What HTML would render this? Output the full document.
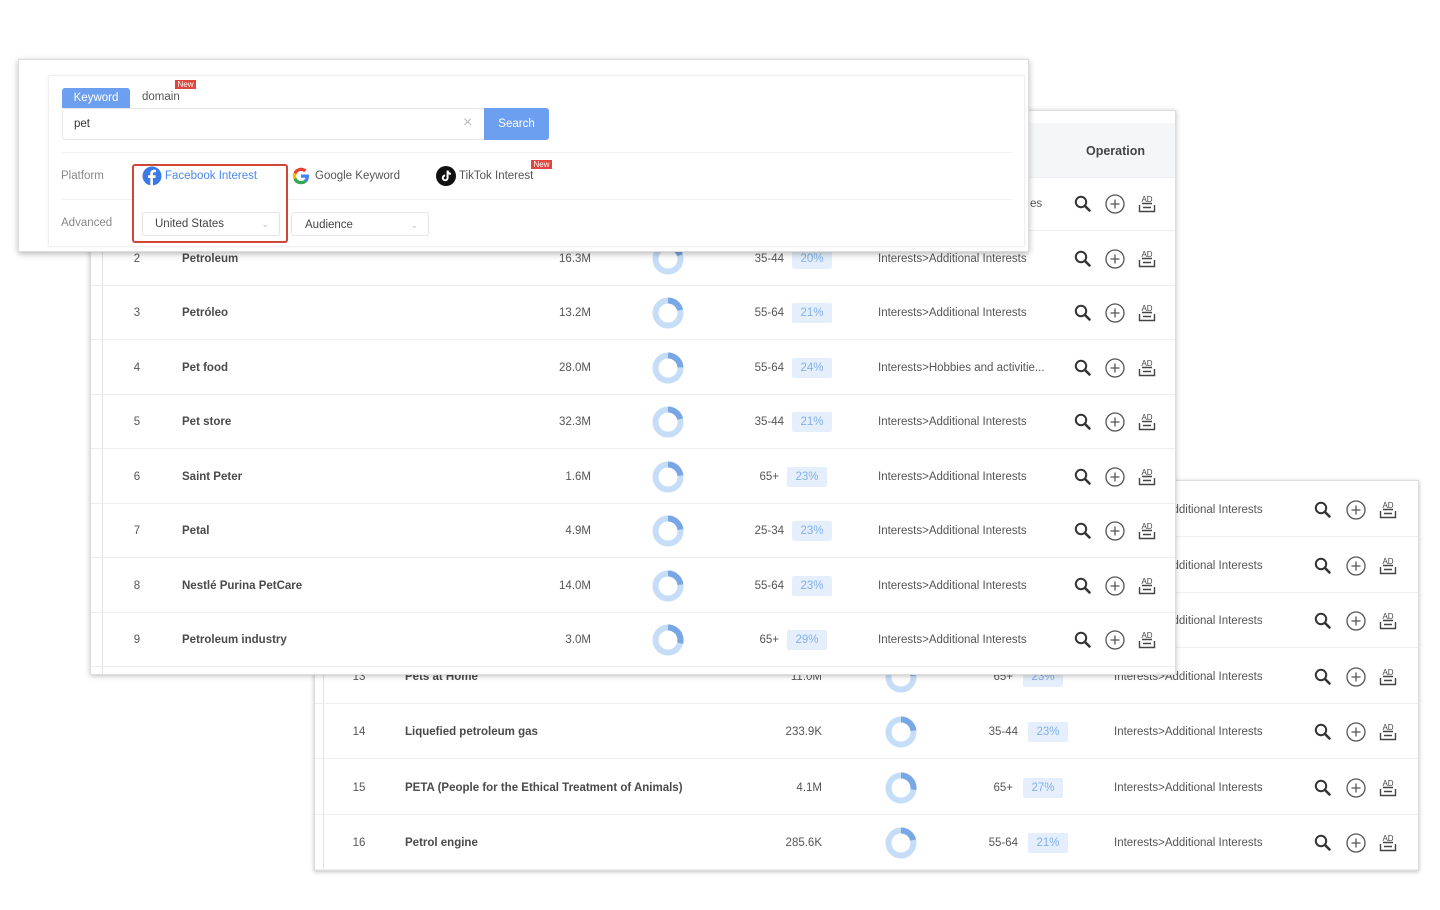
<!DOCTYPE html>
<html><head><meta charset="utf-8"><style>
*{box-sizing:border-box;margin:0;padding:0}
body{width:1440px;height:910px;background:#fff;position:relative;overflow:hidden;font-family:"Liberation Sans",Arial,sans-serif;color:#555;font-size:11.5px}
.p{position:absolute;background:#fff;overflow:hidden}
.row{position:absolute;left:0;right:0;height:54px;border-bottom:1px solid #eceef1}
.row>*{position:absolute;top:0;line-height:54px;white-space:nowrap}
.idx{width:20px;text-align:center}
.nm{font-weight:bold;color:#4a4a4a}
.sz{text-align:right;width:80px}
.age{text-align:right;width:50px}
.bd{top:17px!important;height:20px;line-height:20px!important;width:40px;background:#e5effb;color:#82b0ea;text-align:center;border-radius:2px}
.dn{top:11px!important;line-height:0!important}
.ic{top:17px!important;line-height:0!important}
</style></head><body>

<div class="p" style="left:314px;top:480px;width:1105px;height:391px;border:1px solid #ddd;box-shadow:0 1px 4px rgba(0,0,0,.25)">
  <div style="position:absolute;left:8px;top:0;bottom:0;border-left:1px solid #e3e3e3"></div>
  <div id="p3"></div>
</div>

<div class="p" style="left:90px;top:110px;width:1086px;height:565px;border:1px solid #ddd;box-shadow:0 1px 5px rgba(0,0,0,.25)">
  <div style="position:absolute;left:11px;top:0;bottom:0;border-left:1px solid #e3e3e3"></div>
  <div style="position:absolute;left:11px;right:0;top:12px;height:55px;background:#f5f6f8;border-bottom:1px solid #eceef1"></div>
  <div style="position:absolute;left:995px;top:33px;font-weight:bold;color:#444;font-size:12.5px">Operation</div>
  <div id="p2"></div>
</div>

<div class="p" style="left:18px;top:59px;width:1011px;height:193px;border:1px solid #ddd;box-shadow:0 2px 6px rgba(0,0,0,.28)">
  <div style="position:absolute;left:29px;top:15px;width:977px;height:172px;border:1px solid #f0f0f0;box-shadow:0 0 3px rgba(0,0,0,.06)"></div>
  <div style="position:absolute;left:43px;top:28px;width:68px;height:20px;background:#6d9ff0;color:#fff;text-align:center;line-height:20px;border-radius:3px 3px 0 0">Keyword</div>
  <div style="position:absolute;left:123px;top:31px;color:#555">domain</div>
  <div style="position:absolute;left:156px;top:20px;width:21px;height:9px;background:#e0463d;color:#fff;font-size:8px;line-height:9px;text-align:center">New</div>
  <div style="position:absolute;left:43px;top:48px;width:423px;height:32px;border:1px solid #e6e6e6;border-radius:3px 0 0 3px"></div>
  <div style="position:absolute;left:55px;top:58px;color:#333">pet</div>
  <div style="position:absolute;left:444px;top:54px;color:#bbb;font-size:16px">×</div>
  <div style="position:absolute;left:465px;top:48px;width:65px;height:32px;background:#6d9ff0;color:#fff;line-height:32px;text-align:center;border-radius:0 3px 3px 0">Search</div>
  <div style="position:absolute;left:43px;top:92px;width:950px;border-top:1px solid #f0f0f0"></div>
  <div style="position:absolute;left:42px;top:110px;color:#888">Platform</div>
  <div style="position:absolute;left:43px;top:139px;width:950px;border-top:1px solid #f0f0f0"></div>
  <div style="position:absolute;left:113px;top:104px;width:156px;height:79px;border:2px solid #d1453b;border-radius:3px;background:#fff"></div>
  <svg style="position:absolute;left:123px;top:106px" width="20" height="20" viewBox="0 0 20 20"><circle cx="10" cy="10" r="9.5" fill="#3b79e6"/><path d="M11 19.5V12h2.4l.4-2.7H11V7.6c0-.8.3-1.3 1.4-1.3h1.5V3.9c-.3 0-1.1-.1-2.1-.1-2.1 0-3.5 1.3-3.5 3.6v1.9H6V12h2.3v7.5z" fill="#fff"/></svg>
  <div style="position:absolute;left:146px;top:110px;color:#4d88e8">Facebook Interest</div>
  <svg style="position:absolute;left:272px;top:106px" width="20" height="20" viewBox="0 0 20 20"><path d="M18 10.2c0-.6-.1-1.2-.2-1.7H10v3.3h4.5a3.9 3.9 0 0 1-1.7 2.5v2.1h2.7c1.6-1.5 2.5-3.6 2.5-6.2z" fill="#4285f4"/><path d="M10 18.3c2.3 0 4.2-.8 5.5-2l-2.7-2.1c-.7.5-1.700.8-2.8.8-2.2 0-4-1.5-4.7-3.4H2.6v2.1A8.300 8.300 0 0 0 10 18.3z" fill="#34a853"/><path d="M5.3 11.6a5 5 0 0 1 0-3.2V6.3H2.6a8.3 8.3 0 0 0 0 7.4z" fill="#fbbc05"/><path d="M10 5c1.2 0 2.3.4 3.2 1.2l2.4-2.4A8.3 8.3 0 0 0 2.6 6.3l2.7 2.1C6 6.5 7.8 5 10 5z" fill="#ea4335"/></svg>
  <div style="position:absolute;left:296px;top:110px;color:#555">Google Keyword</div>
  <svg style="position:absolute;left:417px;top:106px" width="20" height="20" viewBox="0 0 20 20"><circle cx="10" cy="10" r="10" fill="#111"/><path d="M10.6 4.5h2c.1 1.3 1 2.3 2.3 2.4v2c-.9 0-1.6-.3-2.3-.7v3.7a3.4 3.4 0 1 1-3.4-3.4v2a1.4 1.4 0 1 0 1.4 1.4z" fill="#fff"/></svg>
  <div style="position:absolute;left:440px;top:110px;color:#555">TikTok Interest</div>
  <div style="position:absolute;left:512px;top:100px;width:21px;height:9px;background:#e0463d;color:#fff;font-size:8px;line-height:9px;text-align:center">New</div>
  <div style="position:absolute;left:42px;top:157px;color:#888">Advanced</div>
  <div style="position:absolute;left:123px;top:152px;width:138px;height:24px;border:1px solid #e3e3e3;border-radius:3px;padding-left:12px;line-height:23px;color:#444">United States<span style="position:absolute;right:10px;color:#bbb;font-size:9px">&#8964;</span></div>
  <div style="position:absolute;left:272px;top:152px;width:138px;height:24px;border:1px solid #e3e3e3;border-radius:3px;padding-left:13px;line-height:24px;color:#444">Audience<span style="position:absolute;right:10px;color:#bbb;font-size:9px">&#8964;</span></div>
</div>

<script>
var ic='<svg width="20" height="20" viewBox="0 0 20 20"><circle cx="8" cy="8" r="5.2" fill="none" stroke="#333" stroke-width="2"/><path d="M12 12l4.5 4.5" stroke="#333" stroke-width="2.6" stroke-linecap="round"/></svg>';
var pl='<svg width="22" height="22" viewBox="0 0 22 22"><circle cx="11" cy="11" r="9" fill="none" stroke="#555" stroke-width="1.3"/><path d="M11 6.5v9M6.5 11h9" stroke="#555" stroke-width="1.3"/></svg>';
var ad='<svg width="22" height="20" viewBox="0 0 22 20"><text x="11" y="8" font-size="8" text-anchor="middle" font-family="Liberation Sans" fill="#444">AD</text><path d="M6 9.5h10M3.5 11v6.5h15V11M7 13.5h8" stroke="#444" stroke-width="1.4" fill="none"/></svg>';
function dn(p){var c=2*Math.PI*12.5,d=c*p/100;return '<svg width="32" height="32" viewBox="0 0 32 32"><circle cx="16" cy="16" r="12.5" fill="none" stroke="#c6ddf8" stroke-width="6"/><circle cx="16" cy="16" r="12.5" fill="none" stroke="#78a7e4" stroke-width="6" stroke-dasharray="'+d+' '+c+'" transform="rotate(-90 16 16)"/></svg>';}
function row(top,c,d){var h='<div class="row" style="top:'+top+'px">';
var o=(d[3]=='65+'?-5:0);
h+='<div class="idx" style="left:'+(c.i-10)+'px">'+d[0]+'</div>';
h+='<div class="nm" style="left:'+c.n+'px">'+d[1]+'</div>';
h+='<div class="sz" style="left:'+(c.s-80)+'px">'+d[2]+'</div>';
if(d[2])h+='<div class="dn" style="left:'+(c.d-16)+'px">'+dn(d[4])+'</div>';
h+='<div class="age" style="left:'+(c.a-50+o)+'px">'+d[3]+'</div>';
if(d[2])h+='<div class="bd" style="left:'+(c.b+o)+'px">'+d[4]+'%</div>';
h+='<div style="left:'+(d[6]||c.c)+'px">'+d[5]+'</div>';
h+='<div class="ic" style="left:'+(c.x[0]-10)+'px">'+ic+'</div>';
h+='<div class="ic" style="left:'+(c.x[1]-11)+'px;top:16px!important">'+pl+'</div>';
h+='<div class="ic" style="left:'+(c.x[2]-11)+'px">'+ad+'</div>';
return h+'</div>';}
var A='Interests&gt;Additional Interests';
var c2={i:46,n:91,s:500,d:577,a:693,b:701,c:787,x:[992,1024,1056]};
var r2=[['1','','','',30,'es',939],['2','Petroleum','16.3M','35-44',20,A],['3','Petróleo','13.2M','55-64',21,A],['4','Pet food','28.0M','55-64',24,'Interests&gt;Hobbies and activitie...'],['5','Pet store','32.3M','35-44',21,A],['6','Saint Peter','1.6M','65+',23,A],['7','Petal','4.9M','25-34',23,A],['8','Nestlé Purina PetCare','14.0M','55-64',23,A],['9','Petroleum industry','3.0M','65+',29,A],['10','','','',20,'']];
var h='';r2.forEach(function(d,k){h+=row(66+k*54.5,c2,d);});
document.getElementById('p2').innerHTML=h;
var c3={i:44,n:90,s:507,d:586,a:703,b:713,c:799,x:[1008,1041,1073]};
var r3=[['10','','','',20,A],['11','','','',20,A],['12','','','',20,A],['13','Pets at Home','11.0M','65+',23,A],['14','Liquefied petroleum gas','233.9K','35-44',23,A],['15','PETA (People for the Ethical Treatment of Animals)','4.1M','65+',27,A],['16','Petrol engine','285.6K','55-64',21,A]];
h='';r3.forEach(function(d,k){h+=row(2+k*55.5,c3,d);});
document.getElementById('p3').innerHTML=h;
</script>
</body></html>
